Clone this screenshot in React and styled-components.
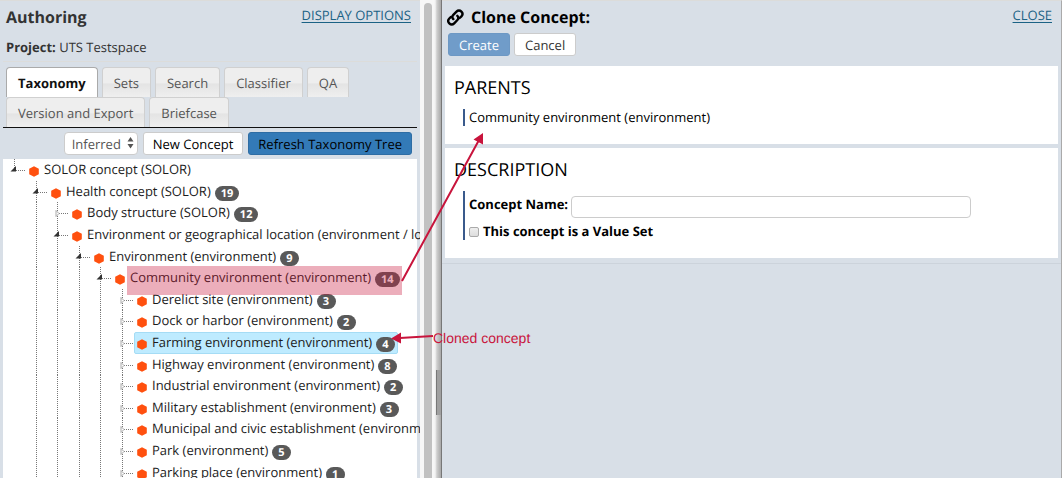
import React from "react";
import styled, { createGlobalStyle, css } from "styled-components";

const colors = {
  panel: "#d8dfe7",
  ink: "#1c1c1c",
  link: "#1b6285",
  rule: "#3a5a8c",
  node: "#ff500f",
  callout: "#c8143c",
};

const GlobalStyle = createGlobalStyle`
  * { box-sizing: border-box; }
  body {
    margin: 0;
    background: ${colors.panel};
    color: ${colors.ink};
    font: 13px/20px "Open Sans", "Noto Sans", sans-serif;
    text-rendering: geometricPrecision;
  }
  button, input, select { font: inherit; margin: 0; text-rendering: inherit; }
`;

const Page = styled.div`
  position: relative;
  display: flex;
  height: 100vh;
  overflow: hidden;
`;

const AuthoringPane = styled.section`
  flex: 0 0 420px;
  min-width: 0;
  display: flex;
  flex-direction: column;
  padding-left: 3px;
  overflow: hidden;
  border-top: 1px solid #dcdcda;
`;

const PaneHeader = styled.header`
  display: flex;
  justify-content: space-between;
  padding: ${(p) => p.$pad || "4px 9px 0 3px"};
`;

const PaneTitle = styled.h1`
  display: flex;
  align-items: center;
  gap: 7px;
  margin: 0;
  font-size: 16px;
  line-height: 24px;
  font-weight: 700;
  color: ${(p) => p.$color || "#333"};
`;

const TextLink = styled.a`
  color: ${colors.link};
  text-decoration: underline;
  text-underline-offset: 2px;
`;

const Project = styled.p`
  margin: 0 3px 0 0;
  padding: 8px 3px 4px;
  color: #333;
  border-bottom: 1px solid #dcdcda;
`;

const Tabs = styled.nav`
  display: flex;
  flex-wrap: wrap;
  gap: 0 4px;
  margin-right: 3px;
  padding: 5px 40px 0 3px;
  border-bottom: 1px solid #111;
`;

const Tab = styled.button`
  height: 30px;
  padding: 0 11px;
  border: 1px solid #d0d0d0;
  border-bottom: 0;
  border-radius: 4px 4px 0 0;
  background: linear-gradient(#eeeeee 50%, #e4e4e4 56%, #efefef);
  color: #555;
  ${(p) =>
    p.$active &&
    css`
      border-color: #aaa;
      background: #fff;
      color: #111;
      font-weight: 700;
    `}
`;

const SelectBox = styled.label`
  position: relative;
  display: flex;
  svg {
    position: absolute;
    right: 4px;
    top: 5px;
    pointer-events: none;
  }
`;

const Select = styled.select`
  appearance: none;
  width: 74px;
  height: 23px;
  padding: 0 7px;
  border: 1px solid #ccc;
  border-radius: 4px;
  background: #fff;
  color: #555;
`;

const Button = styled.button`
  height: 23px;
  padding: 0 10px;
  border: 1px solid ${(p) => p.$border || "#ccc"};
  border-radius: 3px;
  background: ${(p) => p.$bg || "#fff"};
  color: ${(p) => p.$color || "#000"};
  line-height: 20px;
`;

const Toolbar = styled.div`
  display: flex;
  justify-content: flex-end;
  gap: 5px;
  padding: 4px 8px 4px 0;
  ${Button} {
    padding: 0 9px;
  }
`;

const Tree = styled.ul`
  flex: 1;
  min-height: 0;
  margin: 0;
  padding: 0 0 0 10px;
  list-style: none;
  background: linear-gradient(#fff, #fff) left / calc(100% - 3px) 100% no-repeat;
  overflow: hidden;
  white-space: nowrap;
`;

const Row = styled.li`
  display: flex;
  height: 22px;
  &:nth-child(5n + 2),
  &:nth-child(5n) {
    height: 21px;
  }
`;

const dottedLine = css`
  background: repeating-linear-gradient(#777 0 1px, transparent 1px 2px) 1px 0 / 1px 100% no-repeat;
`;

const Guide = styled.span`
  flex: none;
  width: 22px;
  &:nth-child(even) {
    width: 21px;
  }
  ${(p) => p.$line && dottedLine}
`;

const Branch = styled.span`
  flex: none;
  width: 13px;
  height: ${(p) => (p.$root ? "11px" : "auto")};
  ${dottedLine}
  svg {
    display: block;
    margin-left: -4px;
  }
`;

const Concept = styled.span`
  display: flex;
  align-items: center;
  height: 22px;
  padding: 0 2px;
  border: 1px solid transparent;
  border-radius: 2px;
  ${(p) =>
    p.$selected &&
    css`
      border-color: #a5dcf5;
      background: #beebff;
    `}
  > svg {
    flex: none;
    margin-top: 2px;
  }
`;

const ConceptName = styled.span`
  padding: 0 4px 3px 5px;
`;

const Badge = styled.span`
  min-width: 19px;
  height: 15px;
  margin-top: 2px;
  padding: 0 6px;
  border-radius: 8px;
  background: #595959;
  color: #fff;
  font-size: 11px;
  font-weight: 700;
  line-height: 15px;
`;

const ScrollTrack = styled.div`
  flex: 0 0 14px;
  padding: 3px 2px 0 4px;
  background: #f7f7f7;
`;

const ScrollThumb = styled.div`
  height: 100%;
  border-radius: 4px 4px 0 0;
  background: #c1c1c1;
`;

const Splitter = styled.div`
  flex: 0 0 7px;
  display: flex;
  align-items: center;
  padding-top: 306px;
  background: linear-gradient(90deg, #f4f4f4 15%, #cfcfcf 40%, #a8a8a8);
  border-right: 1px solid #777;
  &::before {
    content: "";
    width: 4px;
    height: 45px;
    margin-left: 2px;
    background: #a0a0a0;
    border-left: 1px solid #777;
  }
`;

const ClonePane = styled.section`
  flex: 1;
  min-width: 0;
  border-top: 1px solid #dcdcda;
  border-right: 1px solid #aaa;
`;

const Actions = styled.div`
  display: flex;
  gap: 4px;
  padding: 4px 6px 10px;
`;

const Cards = styled.div`
  display: flex;
  flex-direction: column;
  gap: 4px;
  padding: 0 3px 5px;
  border-bottom: 1px solid #ccd3db;
`;

const Card = styled.section`
  padding: 9px 9px 18px;
  background: #fff;
  color: #000;
`;

const CardTitle = styled.h2`
  margin: 0;
  font-size: 18px;
  line-height: 26px;
  font-weight: 400;
`;

const Ruled = styled.div`
  margin: 8px 0 0 9px;
  padding-left: 4px;
  border-left: 2px solid ${colors.rule};
  line-height: 17px;
`;

const Field = styled.div`
  display: flex;
  align-items: center;
  gap: 4px;
  font-weight: 700;
`;

const NameField = styled(Field)`
  gap: 3px;
  padding-top: 5px;
  label {
    margin-top: -5px;
  }
`;

const NameInput = styled.input`
  width: 69%;
  height: 22px;
  border: 1px solid #ccc;
  border-radius: 4px;
  background: #fff;
`;

const CheckField = styled(Field)`
  padding: 5px 0 0;
`;

const Checkbox = styled.input`
  appearance: none;
  width: 10px;
  height: 10px;
  border: 1px solid #aaa;
  border-radius: 2px;
  background: linear-gradient(#eee, #ddd);
`;

const Highlight = styled.div`
  position: absolute;
  left: 127px;
  top: 266px;
  width: 275px;
  height: 29px;
  background: rgba(200, 24, 60, 0.35);
`;

const Arrows = styled.svg`
  position: absolute;
  left: 0;
  top: 0;
  pointer-events: none;
`;

const Callout = styled.span`
  position: absolute;
  left: 433px;
  top: 330px;
  color: ${colors.callout};
  font: 14px/16px "Liberation Sans", Arial, sans-serif;
`;

const Hexagon = () => (
  <svg width="10" height="11" viewBox="0 0 10 11">
    <path d="M5 0.2 9.8 2.8V8.2L5 10.8 0.2 8.2V2.8Z" fill={colors.node} />
  </svg>
);

const Toggle = ({ open }) => (
  <svg width="18" height="22" viewBox="0 0 18 22">
    <path d="M7 11.5H17" stroke="#777" strokeDasharray="1 1" />
    {open ? (
      <path d="M1.500 12.500 7 7V12.500Z" fill="#333" />
    ) : (
      <path d="M4 8.500 7 11.500 4 14.500Z" fill="#fff" stroke="#aaa" />
    )}
  </svg>
);

const UpDown = () => (
  <svg width="7" height="12" viewBox="0 0 7 12">
    <path d="M3.500 0 6.500 4.600H0.500ZM3.500 11.600 0.500 7H6.500Z" fill="#555" />
  </svg>
);

const LinkIcon = () => (
  <svg width="17" height="17" viewBox="0 0 17 17" fill="none" stroke="#000" strokeWidth="2.4" strokeLinecap="round">
    <path d="M6.3 10.1C5 8.6 5.2 7 6.3 5.9L9.5 2.6C10.9 1.2 13 1.2 14.4 2.6S15.7 6 14.4 7.4L12.7 9" />
    <path d="M10.3 6.8C11.7 8.3 11.5 9.9 10.4 11L7.2 14.3C5.8 15.7 3.7 15.7 2.3 14.3S1 10.9 2.3 9.5L4 7.9" />
  </svg>
);

const tabs = ["Taxonomy", "Sets", "Search", "Classifier", "QA", "Version and Export", "Briefcase"];

const concepts = [
  { depth: 0, open: true, name: "SOLOR concept (SOLOR)" },
  { depth: 1, open: true, name: "Health concept (SOLOR)", count: 19 },
  { depth: 2, name: "Body structure (SOLOR)", count: 12 },
  { depth: 2, open: true, name: "Environment or geographical location (environment / location)" },
  { depth: 3, open: true, name: "Environment (environment)", count: 9 },
  { depth: 4, open: true, name: "Community environment (environment)", count: 14 },
  { depth: 5, name: "Derelict site (environment)", count: 3 },
  { depth: 5, name: "Dock or harbor (environment)", count: 2 },
  { depth: 5, name: "Farming environment (environment)", count: 4, selected: true },
  { depth: 5, name: "Highway environment (environment)", count: 8 },
  { depth: 5, name: "Industrial environment (environment)", count: 2 },
  { depth: 5, name: "Military establishment (environment)", count: 3 },
  { depth: 5, name: "Municipal and civic establishment (environment)" },
  { depth: 5, name: "Park (environment)", count: 5 },
  { depth: 5, name: "Parking place (environment)", count: 1 },
];

export default function App() {
  return (
    <Page>
      <GlobalStyle />
      <AuthoringPane>
        <PaneHeader>
          <PaneTitle>Authoring</PaneTitle>
          <TextLink href="#options">DISPLAY OPTIONS</TextLink>
        </PaneHeader>
        <Project>
          <b>Project:</b> UTS Testspace
        </Project>
        <Tabs>
          {tabs.map((tab, i) => (
            <Tab key={tab} type="button" $active={i === 0}>
              {tab}
            </Tab>
          ))}
        </Tabs>
        <Toolbar>
          <SelectBox>
            <Select aria-label="Taxonomy view" defaultValue="Inferred">
              <option>Inferred</option>
            </Select>
            <UpDown />
          </SelectBox>
          <Button type="button">New Concept</Button>
          <Button type="button" $bg="#337ab7" $border="#2e6da4">
            Refresh Taxonomy Tree
          </Button>
        </Toolbar>
        <Tree>
          {concepts.map((c) => (
            <Row key={c.name}>
              {Array.from({ length: c.depth }, (_, i) => (
                <Guide key={i} $line={i > 0} />
              ))}
              <Branch $root={c.depth === 0}>
                <Toggle open={c.open} />
              </Branch>
              <Concept $selected={c.selected}>
                <Hexagon />
                <ConceptName>{c.name}</ConceptName>
                {c.count && <Badge>{c.count}</Badge>}
              </Concept>
            </Row>
          ))}
        </Tree>
      </AuthoringPane>
      <ScrollTrack>
        <ScrollThumb />
      </ScrollTrack>
      <Splitter />
      <ClonePane>
        <PaneHeader $pad="4px 9px 0 5px">
          <PaneTitle $color="#000">
            <LinkIcon />
            Clone Concept:
          </PaneTitle>
          <TextLink href="#close">CLOSE</TextLink>
        </PaneHeader>
        <Actions>
          <Button type="button" $bg="#709cc9" $border="#6d98c4" $color="#fff">
            Create
          </Button>
          <Button type="button" $color="#333">
            Cancel
          </Button>
        </Actions>
        <Cards>
          <Card>
            <CardTitle>PARENTS</CardTitle>
            <Ruled>Community environment (environment)</Ruled>
          </Card>
          <Card>
            <CardTitle>DESCRIPTION</CardTitle>
            <Ruled>
              <NameField>
                <label htmlFor="concept-name">Concept Name:</label>
                <NameInput id="concept-name" type="text" />
              </NameField>
              <CheckField>
                <Checkbox id="value-set" type="checkbox" />
                <label htmlFor="value-set">This concept is a Value Set</label>
              </CheckField>
            </Ruled>
          </Card>
        </Cards>
      </ClonePane>
      <Highlight />
      <Arrows width="540" height="360" viewBox="0 0 540 360">
        <path d="M402 281 479 140M433 336 400 338" stroke={colors.callout} strokeWidth="2" />
        <path d="M483 133V144.500L473.500 139.500ZM391 338.500 401 332.500V343.500Z" fill={colors.callout} />
      </Arrows>
      <Callout>Cloned concept</Callout>
    </Page>
  );
}
